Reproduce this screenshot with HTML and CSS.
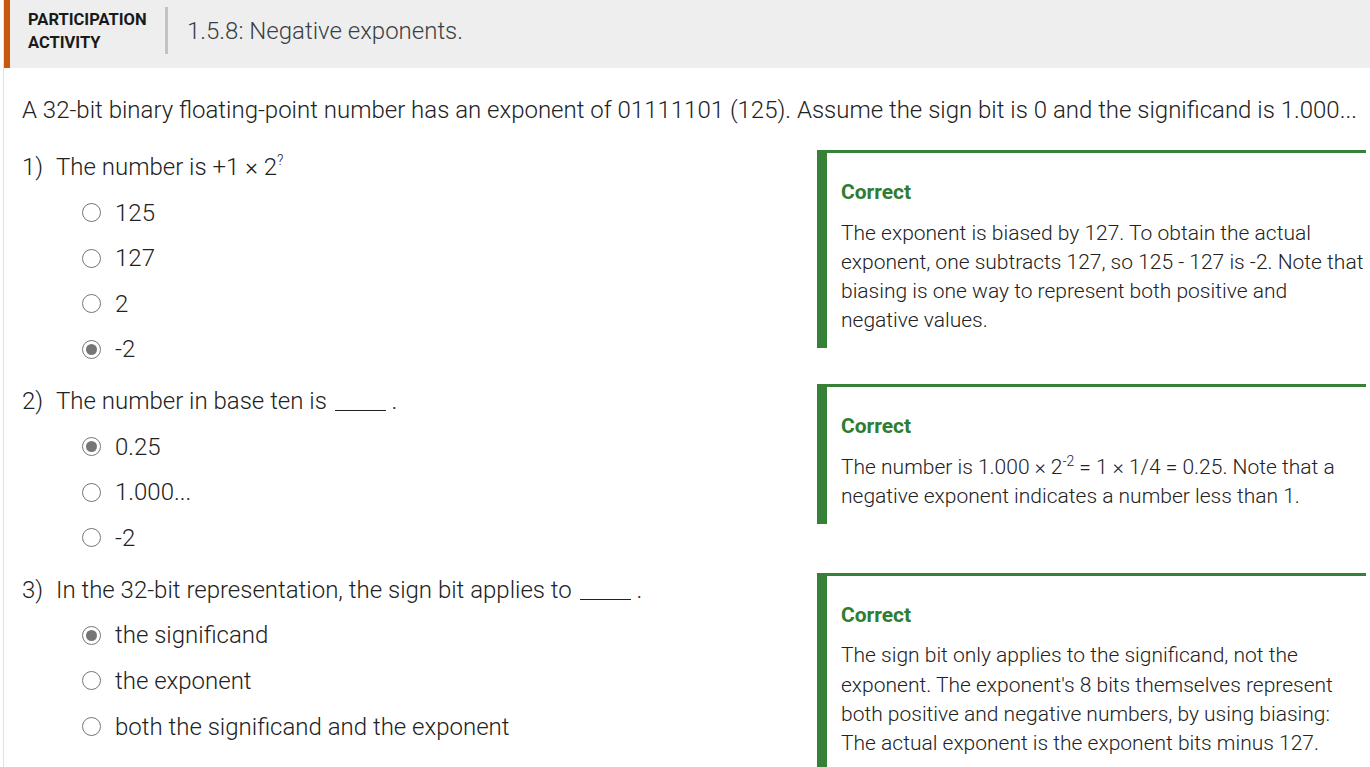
FILE: index.html
```html
<!DOCTYPE html>
<html>
<head>
<meta charset="utf-8">
<link rel="stylesheet" href="styles.css">
</head>
<body>
<div class="activity">
  <div class="header">
    <div class="label">PARTICIPATION<br>ACTIVITY</div>
    <div class="divider"></div>
    <div class="title">1.5.8: Negative exponents.</div>
  </div>
  <div class="content">
    <p class="intro">A 32-bit binary floating-point number has an exponent of 01111101 (125). Assume the sign bit is 0 and the significand is 1.000...</p>

    <div class="row">
      <div class="question">
        <div class="prompt"><span class="num">1)</span><span>The number is +1 &times; 2<sup>?</sup></span></div>
        <ul class="options">
          <li><span class="radio"></span>125</li>
          <li><span class="radio"></span>127</li>
          <li><span class="radio"></span>2</li>
          <li><span class="radio checked"></span>-2</li>
        </ul>
      </div>
      <div class="feedback">
        <div class="verdict">Correct</div>
        <p>The exponent is biased by 127. To obtain the actual exponent, one subtracts 127, so 125 - 127 is -2. Note that biasing is one way to represent both positive and negative values.</p>
      </div>
    </div>

    <div class="row">
      <div class="question">
        <div class="prompt"><span class="num">2)</span><span>The number in base ten is <span class="blank"></span> .</span></div>
        <ul class="options">
          <li><span class="radio checked"></span>0.25</li>
          <li><span class="radio"></span>1.000...</li>
          <li><span class="radio"></span>-2</li>
        </ul>
      </div>
      <div class="feedback">
        <div class="verdict">Correct</div>
        <p>The number is 1.000 &times; 2<sup>-2</sup> = 1 &times; 1/4 = 0.25. Note that a negative exponent indicates a number less than 1.</p>
      </div>
    </div>

    <div class="row">
      <div class="question">
        <div class="prompt"><span class="num">3)</span><span>In the 32-bit representation, the sign bit applies to <span class="blank"></span> .</span></div>
        <ul class="options">
          <li><span class="radio checked"></span>the significand</li>
          <li><span class="radio"></span>the exponent</li>
          <li><span class="radio"></span>both the significand and the exponent</li>
        </ul>
      </div>
      <div class="feedback">
        <div class="verdict">Correct</div>
        <p>The sign bit only applies to the significand, not the exponent. The exponent's 8 bits themselves represent both positive and negative numbers, by using biasing: The actual exponent is the exponent bits minus 127.</p>
      </div>
    </div>
  </div>
</div>
</body>
</html>
```
FILE: styles.css
```css
html, body {
  margin: 0;
  padding: 0;
  background: #ffffff;
}
body {
  font-family: Roboto, "Liberation Sans", sans-serif;
  color: #333333;
  overflow: hidden;
}
.activity {
  margin-left: 3px;
  border-left: 1px solid #e2e2e2;
  min-height: 767px;
}
.header {
  display: flex;
  align-items: center;
  height: 68px;
  box-sizing: border-box;
  padding: 7px 0 14px 18px;
  background: #eeeeee;
  border-left: 6px solid #c8590f;
}
.label {
  font-weight: 700;
  font-size: 16.5px;
  line-height: 23px;
  color: #1a1a1a;
  width: 137px;
}
.divider {
  width: 3px;
  height: 47px;
  background: #c2c2c2;
}
.title {
  margin-left: 19px;
  font-size: 24px;
  font-weight: 300;
  color: #3a3f44;
}
.content {
  padding: 0 0 0 18px;
}
.intro {
  margin: 27px 0 25px 0;
  font-size: 24px;
  line-height: 30px;
  font-weight: 300;
  color: #222;
  white-space: nowrap;
}
.row {
  display: flex;
  align-items: flex-start;
  margin-bottom: 12px;
}
.question {
  flex: 1;
}
.prompt {
  display: flex;
  font-size: 24px;
  font-weight: 300;
  line-height: 34px;
  height: 34px;
  color: #222;
}
.prompt sup {
  font-size: 14px;
  line-height: 0;
  vertical-align: 10px;
}
.num {
  width: 34px;
  flex: none;
}
.blank {
  display: inline-block;
  width: 51px;
  border-bottom: 1px solid #222;
  margin-left: 2px;
  vertical-align: -2px;
}
.options {
  list-style: none;
  margin: 5.8px 0 0 0;
  padding: 0 0 0 60px;
}
.options li {
  display: flex;
  align-items: center;
  height: 45.6px;
  font-size: 24px;
  font-weight: 300;
  color: #222;
}
.radio {
  width: 19px;
  height: 19px;
  box-sizing: border-box;
  border: 1.5px solid #767676;
  border-radius: 50%;
  margin-right: 14px;
  flex: none;
  display: flex;
  align-items: center;
  justify-content: center;
}
.radio.checked::after {
  content: "";
  width: 11px;
  height: 11px;
  border-radius: 50%;
  background: #767676;
}
.feedback {
  width: 549px;
  flex: none;
  box-sizing: border-box;
  border-top: 3px solid #368038;
  border-left: 10px solid #368038;
  padding: 26px 2px 12.5px 14px;
  margin-right: 4px;
}
.verdict {
  font-size: 21px;
  font-weight: 700;
  line-height: 26px;
  color: #2f7d32;
}
.feedback p {
  margin: 13.5px 0 0 0;
  font-size: 21px;
  font-weight: 300;
  line-height: 29.3px;
  color: #222;
}
.feedback sup {
  font-size: 14px;
  line-height: 0;
  vertical-align: 8px;
}
```
